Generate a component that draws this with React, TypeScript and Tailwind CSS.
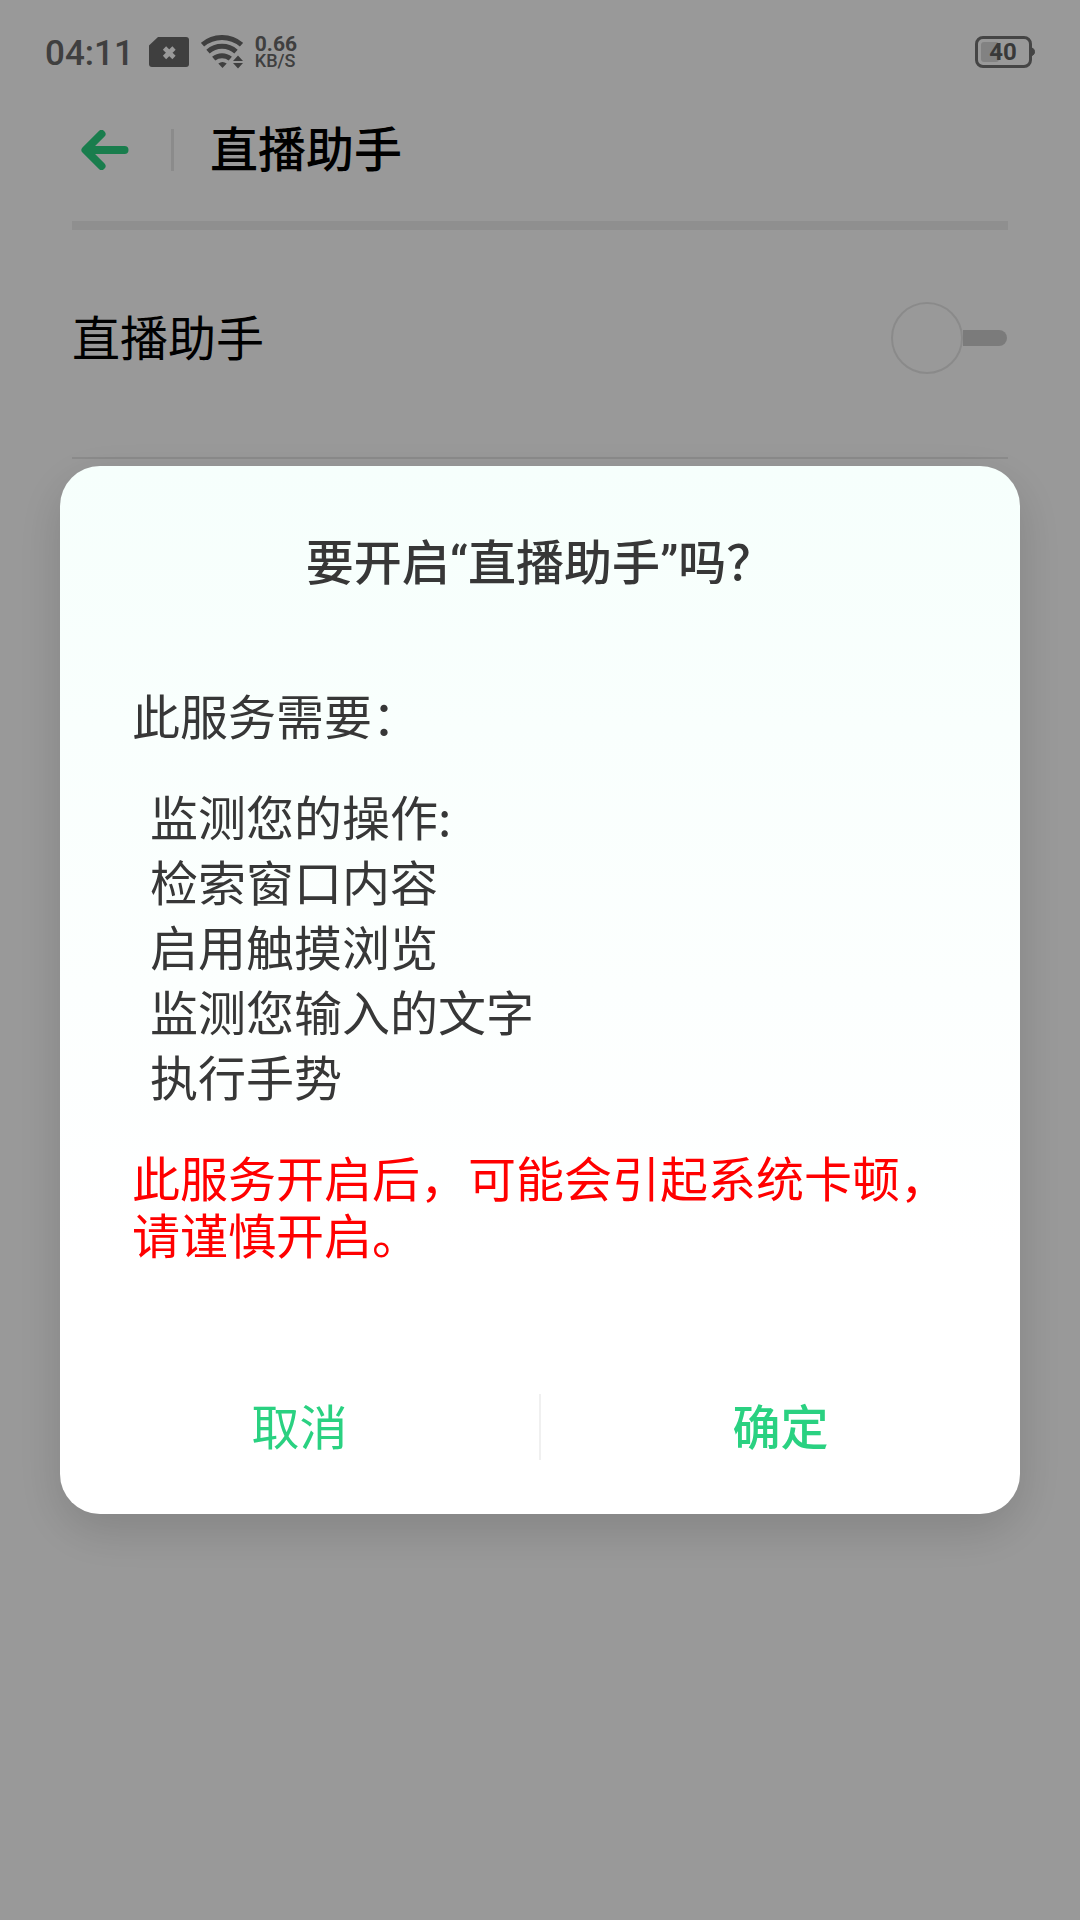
import { useState } from "react";

const CAPABILITIES = [
  "监测您的操作:",
  "检索窗口内容",
  "启用触摸浏览",
  "监测您输入的文字",
  "执行手势",
];

function SimIcon() {
  return (
    <svg width="40" height="30" viewBox="0 0 40 30" aria-hidden="true">
      <path d="M9 0H37a3 3 0 0 1 3 3V27a3 3 0 0 1-3 3H3a3 3 0 0 1-3-3V8.500Z" fill="#696969" />
      <path d="M15.500 11l9.500 9.500M25 11L15.500 20.500" stroke="#fff" strokeWidth="4.600" />
    </svg>
  );
}

function WifiIcon() {
  return (
    <svg width="42" height="34" viewBox="0 0 42 34" aria-hidden="true">
      <g fill="none" stroke="#696969" strokeWidth="5">
        <path d="M1.500 9.700a30 30 0 0 1 39 0" />
        <path d="M7 16.700a21 21 0 0 1 28 0" />
        <path d="M12.700 23.700a13 13 0 0 1 16.600 0" />
      </g>
      <g fill="#696969">
        <path d="M17.300 28.500q4.200-3 8.400 0L21.500 33Z" />
        <path d="M37 20.500l5 5.500h-10ZM37 33.500l5-5.500h-10Z" />
      </g>
    </svg>
  );
}

function BatteryIcon({ level }: { level: number }) {
  return (
    <div className="relative flex items-center" role="img" aria-label={`${level}%`}>
      <svg width="60" height="32" viewBox="0 0 60 32" aria-hidden="true">
        <rect x="1.500" y="1.500" width="54" height="29" rx="6.500" fill="none" stroke="#737373" strokeWidth="3" />
        <rect x="6" y="6" width="18" height="20" rx="3" fill="#d9d9d9" />
        <path d="M57 12a4 4 0 0 1 0 7.500Z" fill="#737373" stroke="#737373" strokeWidth="1" />
      </svg>
      <span className="absolute inset-0 pr-1 text-center text-2xl leading-8 font-bold text-[#5f5f5f]">
        {level}
      </span>
    </div>
  );
}

function BackIcon() {
  return (
    <svg width="48" height="40" viewBox="0 0 48 40" aria-hidden="true">
      <path d="M5 20H43.500M20.500 4L4.500 20l16 16" fill="none" stroke="#2ad181" strokeWidth="8" strokeLinecap="round" strokeLinejoin="round" />
      <path d="M4 20L14 12v16Z" fill="#2ad181" />
    </svg>
  );
}

export default function App() {
  const [enabled, setEnabled] = useState(false);
  const [dialogOpen, setDialogOpen] = useState(true);

  const handleConfirm = () => {
    setEnabled(true);
    setDialogOpen(false);
  };

  const handleToggle = () => {
    if (enabled) {
      setEnabled(false);
    } else {
      setDialogOpen(true);
    }
  };

  return (
    <div
      lang="zh-CN"
      className="min-h-screen bg-white font-['Roboto','Noto_Sans_CJK_SC',sans-serif] text-5xl text-black"
    >
      {/* Status bar */}
      <div className="flex h-[104px] items-center justify-between px-[45px] text-[#696969]">
        <div className="flex items-center gap-3">
          <span className="pt-1 pr-[3px] text-[35px] leading-10 font-medium">04:11</span>
          <SimIcon />
          <WifiIcon />
          <div className="font-bold">
            <div className="text-[21px] leading-[18px]">0.66</div>
            <div className="text-lg leading-4 font-medium">KB/S</div>
          </div>
        </div>
        <BatteryIcon level={40} />
      </div>

      {/* Header */}
      <header className="flex h-[92px] items-center pl-[81px]">
        <button type="button" aria-label="返回">
          <BackIcon />
        </button>
        <div className="mr-9 ml-[42px] h-[42px] w-[3px] bg-[#e8e8e8]" />
        <h1 className="pt-0.5 leading-16 font-medium">直播助手</h1>
      </header>

      <main className="mx-18 mt-[25px] border-t-9 border-[#eeeeee]">
        <div className="flex items-center justify-between border-b-2 border-[#e7e7e7] pt-18 pb-[83px]">
          <label htmlFor="assistant-switch" className="pt-1 leading-16">
            直播助手
          </label>
          <input
            id="assistant-switch"
            type="checkbox"
            role="switch"
            checked={enabled}
            onChange={handleToggle}
            className="mr-px flex appearance-none items-center before:size-18 before:rounded-full before:border-2 before:border-[#e7e7e7] after:h-4 after:w-11 after:rounded-r-full after:bg-[#cecece] checked:flex-row-reverse checked:after:rounded-l-full checked:after:rounded-r-none checked:after:bg-[#2ad181]"
          />
        </div>
      </main>

      {/* Confirm dialog */}
      {dialogOpen && (
        <div className="fixed inset-0 flex items-center justify-center bg-black/40 px-15 pt-15">
          <div
            role="dialog"
            aria-modal="true"
            aria-labelledby="dialog-title"
            className="w-full rounded-[40px] bg-linear-to-b from-[#f6fffc] to-white to-75% pt-[66px] pb-[54px] text-[#373737] shadow-[0_16px_48px_rgba(0,0,0,0.15)]"
          >
            <h2 id="dialog-title" className="text-center leading-16 font-medium">
              要开启“直播助手”吗？
            </h2>
            <div className="mt-[94px] px-18">
              <p className="leading-[57px]">此服务需要：</p>
              <ul className="mt-9 mb-11 pl-[18px] font-['Noto_Sans_CJK_SC',sans-serif] leading-[65px]">
                {CAPABILITIES.map((item) => (
                  <li key={item}>{item}</li>
                ))}
              </ul>
              <p className="leading-[57px] text-[#ff0000]">
                此服务开启后，可能会引起系统卡顿，请谨慎开启。
              </p>
            </div>
            <div className="mt-32 flex h-[66px] divide-x-2 divide-[#f0f0f0] text-[#2ad181]">
              <button type="button" className="flex-1 pt-1" onClick={() => setDialogOpen(false)}>
                取消
              </button>
              <button type="button" className="flex-1 pt-1 font-medium" onClick={handleConfirm}>
                确定
              </button>
            </div>
          </div>
        </div>
      )}
    </div>
  );
}
